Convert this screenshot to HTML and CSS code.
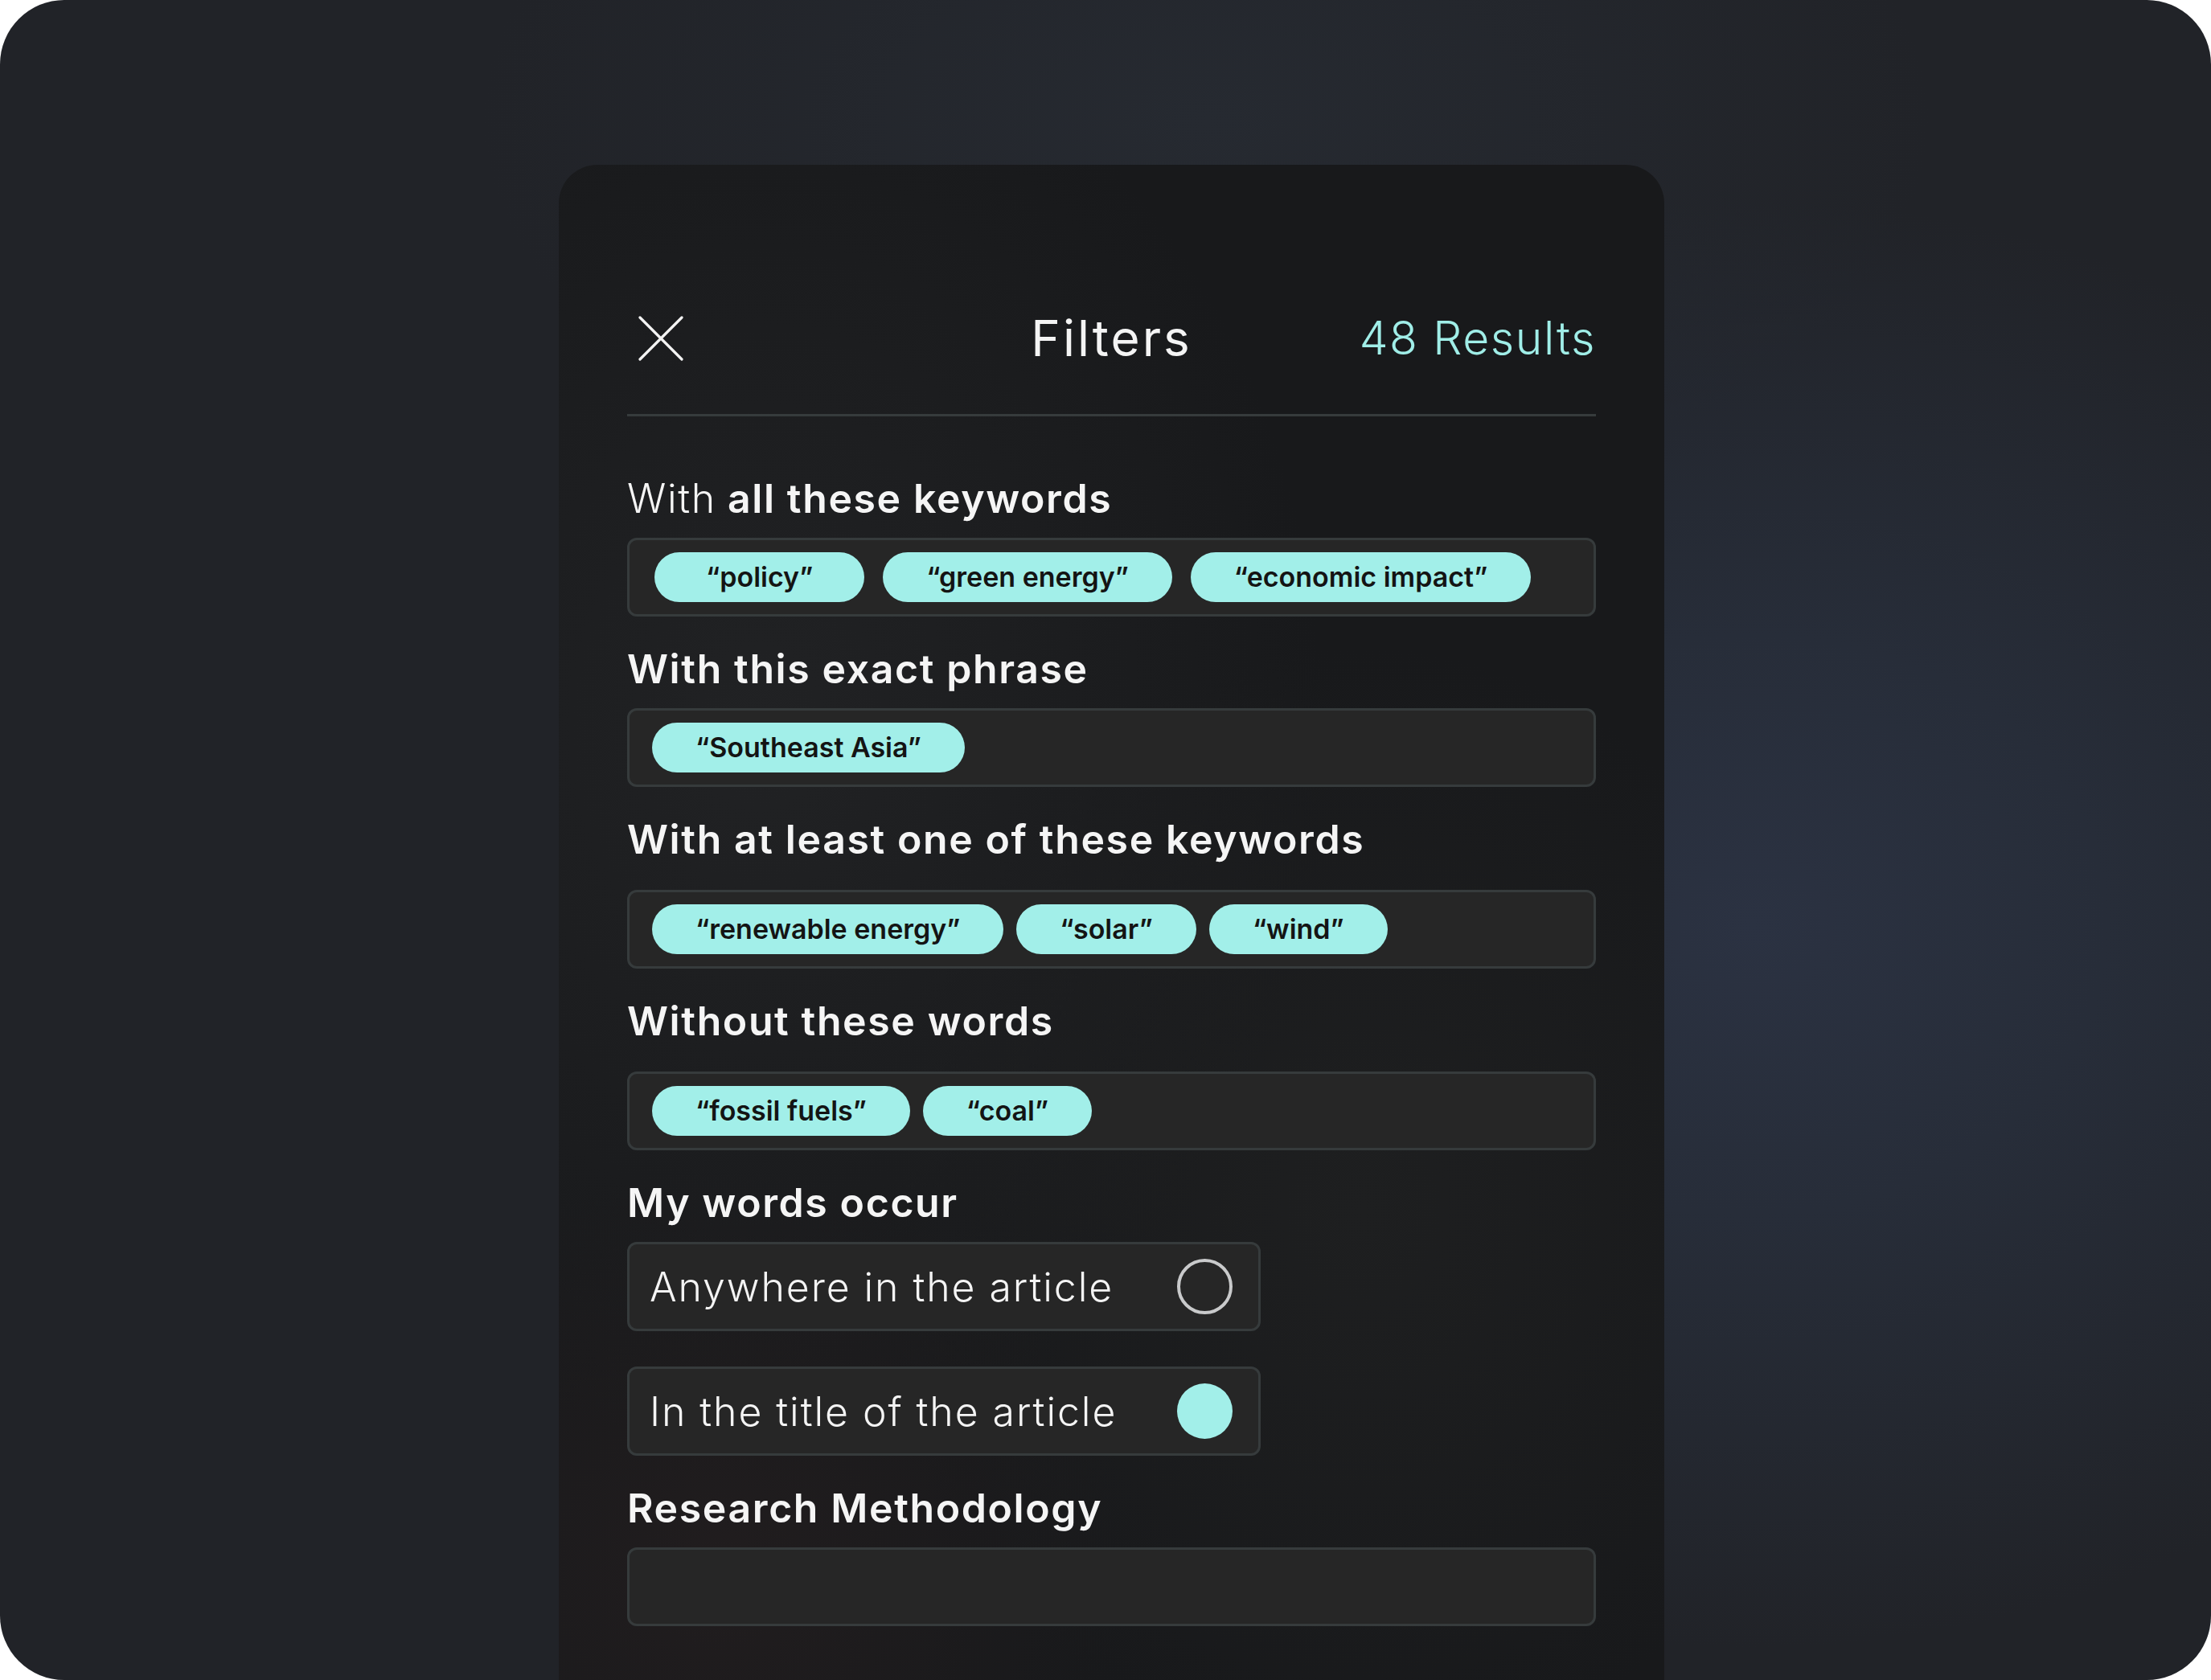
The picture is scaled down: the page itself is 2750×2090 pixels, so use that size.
FILE: index.html
```html
<!DOCTYPE html>
<html lang="en">
<head>
<meta charset="utf-8">
<title>Filters</title>
<link rel="stylesheet" href="styles.css">
</head>
<body>
<div class="frame">
  <div class="panel">
    <header class="head">
      <button class="close" aria-label="Close">
        <svg viewBox="0 0 56 56" width="56" height="56"><path d="M2 2 L54 54 M54 2 L2 54" stroke="#f4f4f4" stroke-width="3.2" stroke-linecap="round" fill="none"/></svg>
      </button>
      <h1 class="title">Filters</h1>
      <div class="results">48 Results</div>
    </header>
    <div class="divider"></div>

    <div class="filters">
      <section class="group">
        <h2 class="label"><span class="light">With</span> all these keywords</h2>
        <div class="field field--wide">
          <span class="chip chip--roomy">“policy”</span>
          <span class="chip">“green energy”</span>
          <span class="chip">“economic impact”</span>
        </div>
      </section>

      <section class="group">
        <h2 class="label">With this exact phrase</h2>
        <div class="field">
          <span class="chip">“Southeast Asia”</span>
        </div>
      </section>

      <section class="group group--loose">
        <h2 class="label">With at least one of these keywords</h2>
        <div class="field">
          <span class="chip">“renewable energy”</span>
          <span class="chip">“solar”</span>
          <span class="chip">“wind”</span>
        </div>
      </section>

      <section class="group group--loose">
        <h2 class="label">Without these words</h2>
        <div class="field">
          <span class="chip">“fossil fuels”</span>
          <span class="chip">“coal”</span>
        </div>
      </section>

      <section class="group">
        <h2 class="label">My words occur</h2>
        <div class="options">
          <div class="option">
            <span class="option-text">Anywhere in the article</span>
            <span class="radio"></span>
          </div>
          <div class="option">
            <span class="option-text">In the title of the article</span>
            <span class="radio radio--on"></span>
          </div>
        </div>
      </section>

      <section class="group">
        <h2 class="label">Research Methodology</h2>
        <div class="field"></div>
      </section>
    </div>
  </div>
</div>
</body>
</html>
```

FILE: styles.css
```css
* { box-sizing: border-box; }

html, body {
  margin: 0;
  padding: 0;
  background: #ffffff;
}

body {
  font-family: "Inter", "Lato", "Noto Sans", sans-serif;
  color: #f4f4f4;
}

.frame {
  width: 2750px;
  height: 2090px;
  border-radius: 80px;
  overflow: hidden;
  display: flex;
  justify-content: center;
  padding: 205px 0 0 15px;
  background:
    radial-gradient(ellipse 1100px 900px at 2180px 1150px, #2b3242 0%, #272d39 40%, rgba(33,35,40,0) 100%),
    radial-gradient(ellipse 900px 500px at 1500px 150px, #262a31 0%, rgba(33,35,40,0) 100%),
    #212328;
}

.panel {
  width: 1375px;
  border-radius: 48px 48px 0 0;
  padding: 0 85px;
  background:
    radial-gradient(ellipse 500px 500px at 200px 1750px, rgba(40,32,33,0.55) 0%, rgba(24,25,27,0) 100%),
    radial-gradient(ellipse 700px 900px at 250px 700px, #212224 0%, rgba(24,25,27,0) 100%),
    radial-gradient(ellipse 600px 700px at 1000px 1300px, #1e1f20 0%, rgba(24,25,27,0) 100%),
    #18191b;
}

/* header */
.head {
  margin-top: 161px;
  height: 110px;
  display: grid;
  grid-template-columns: 1fr auto 1fr;
  align-items: center;
}

.close {
  justify-self: start;
  margin-left: 14px;
  width: 56px;
  height: 56px;
  padding: 0;
  border: 0;
  background: none;
  display: block;
}

.close svg { display: block; }

.title {
  margin: 0;
  font-size: 62px;
  line-height: 80px;
  font-weight: 400;
  letter-spacing: 3px;
  color: #f4f4f4;
}

.results {
  justify-self: end;
  font-size: 57px;
  line-height: 80px;
  font-weight: 300;
  letter-spacing: 1.6px;
  color: #a0eee8;
}

.divider {
  margin-top: 39px;
  height: 3px;
  background: #363b3c;
}

/* filter groups */
.filters {
  margin-top: 72px;
  display: flex;
  flex-direction: column;
  gap: 35px;
}

.group {
  display: flex;
  flex-direction: column;
  gap: 19px;
}

.group--loose { gap: 33px; }

.label {
  margin: 0;
  font-size: 50px;
  line-height: 60px;
  font-weight: 600;
  letter-spacing: 1.6px;
  color: #f5f5f5;
}

.light { font-weight: 300; }

.field {
  height: 98px;
  border: 3px solid #363b3c;
  border-radius: 12px;
  background: #262626;
  padding: 15px 28px;
  display: flex;
  align-items: center;
  gap: 16px;
}

.field--wide { gap: 23px; padding-left: 31px; }

.chip {
  height: 62px;
  padding: 0 54px;
  border-radius: 31px;
  background: #a2efe9;
  color: #141414;
  font-size: 34px;
  line-height: 62px;
  font-weight: 600;
  letter-spacing: 0;
  white-space: nowrap;
}

.chip--roomy { padding: 0 64px; }

/* radio options */
.options {
  display: flex;
  flex-direction: column;
  gap: 44px;
}

.option {
  width: 788px;
  height: 111px;
  border: 3px solid #363b3c;
  border-radius: 12px;
  background: #262626;
  padding: 0 32px 0 25px;
  display: flex;
  align-items: center;
  justify-content: space-between;
}

.option-text {
  font-size: 50px;
  line-height: 60px;
  font-weight: 300;
  letter-spacing: 1.9px;
  color: #f4f4f4;
}

.radio {
  width: 69px;
  height: 69px;
  border-radius: 50%;
  border: 4px solid #c9cacb;
  flex: none;
}

.radio--on {
  border: 0;
  background: #a2efe9;
}
```
